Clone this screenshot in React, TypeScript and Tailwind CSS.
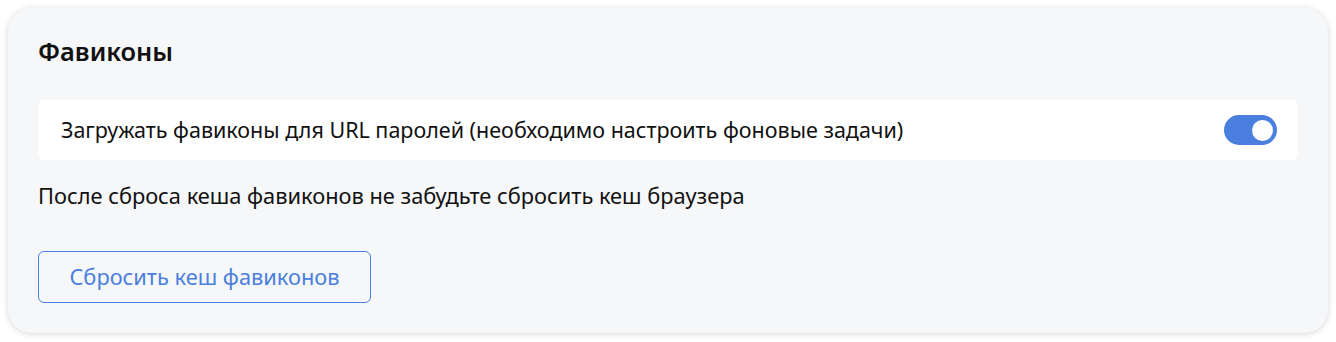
import { useState } from 'react';

const App = () => {
  const [enabled, setEnabled] = useState(true);

  return (
    <div className="w-[1336px] h-[342px] bg-white p-2 font-['Noto_Sans',sans-serif]">
      <section className="rounded-[24px] bg-[#f6f7f9] shadow-[0_1px_6px_rgba(0,0,0,0.16)] px-[30px] pt-[27px] pb-[30px] text-[#111]">
        {/* Title */}
        <h2 className="text-[25.4px] leading-[32px] font-semibold">Фавиконы</h2>

        {/* Toggle row */}
        <div className="mt-[33px] h-[60px] rounded-[6px] bg-white flex items-center justify-between pl-[23px] pr-[21px]">
          <span className="text-[21.5px] leading-[30px]">Загружать фавиконы для URL паролей (необходимо настроить фоновые задачи)</span>
          <button
            onClick={() => setEnabled(!enabled)}
            className={`w-[53px] h-[30px] rounded-full flex items-center px-[4px] ${enabled ? 'bg-[#4a7fe0] justify-end' : 'bg-gray-300 justify-start'}`}
          >
            <span className="w-[21px] h-[21px] rounded-full bg-white" />
          </button>
        </div>

        <p className="mt-[21px] text-[21.8px] leading-[30px]">После сброса кеша фавиконов не забудьте сбросить кеш браузера</p>

        {/* Reset button */}
        <button className="mt-[40px] w-[333px] h-[52px] rounded-[6px] border border-[#4a7fe0] text-[#4a7fe0] text-[21.8px] leading-[30px]">
          Сбросить кеш фавиконов
        </button>
      </section>
    </div>
  );
};

export default App;
